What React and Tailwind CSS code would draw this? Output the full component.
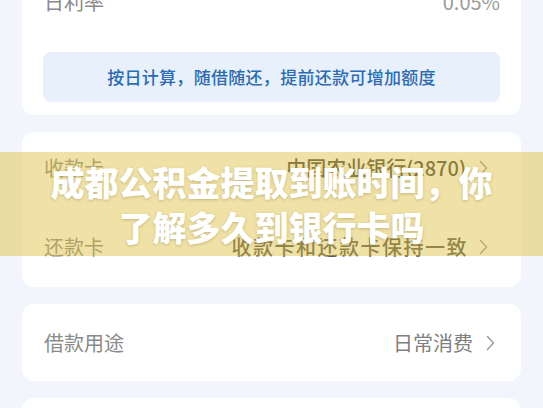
import React from "react";

function Chevron({ className = "" }) {
  return (
    <svg
      width="9"
      height="16"
      viewBox="0 0 9 16"
      fill="none"
      className={className}
    >
      <path d="M1.5 1.5 L7.5 8 L1.5 14.5" stroke="#9a9a9a" strokeWidth="1.4" strokeLinecap="round" strokeLinejoin="round" />
    </svg>
  );
}

function Row({ label, value, valueClass, chevronClass }) {
  return (
    <div className="flex items-center justify-between h-[32px]">
      <span className="text-[20px] text-[#8a8a8a] leading-none">{label}</span>
      <div className="flex items-center">
        <span className={`leading-none ${valueClass}`}>{value}</span>
        <Chevron className={chevronClass} />
      </div>
    </div>
  );
}

export default function App() {
  return (
    <div
      className="relative w-[543px] h-[408px] overflow-hidden bg-[#f2f5fb]"
      style={{ fontFamily: '"Noto Sans CJK SC", "Noto Sans", sans-serif' }}
    >
      <div className="flex flex-col gap-[17px] px-[22px] -mt-[24px]">
        {/* Rate card */}
        <div className="bg-white rounded-[12px] px-[21px] pb-[13px]">
          <div className="flex items-center justify-between h-[52px] pl-[1px]">
            <span className="text-[20px] text-[#8a8a8a] leading-none">日利率</span>
            <span className="text-[20px] text-[#9a9a9a] leading-none">0.05%</span>
          </div>
          <div className="mt-[24px] h-[50px] rounded-[8px] bg-[#e8f0fc] flex items-center justify-center">
            <span className="text-[17px] text-[#2a6bb4] font-medium tracking-[0.3px]">
              按日计算，随借随还，提前还款可增加额度
            </span>
          </div>
        </div>

        {/* Card settings */}
        <div className="bg-white rounded-[12px] pl-[22px] pr-[33px] pt-[20px] pb-[24px] flex flex-col gap-[47px]">
          <Row
            label="收款卡"
            value="中国农业银行(2870)"
            valueClass="text-[20px] text-[#444] font-medium"
            chevronClass="ml-[13px]"
          />
          <Row
            label="还款卡"
            value="收款卡和还款卡保持一致"
            valueClass="text-[20px] text-[#555] font-medium tracking-[1.5px]"
            chevronClass="ml-[11px]"
          />
        </div>

        {/* Purpose */}
        <div className="bg-white rounded-[12px] pl-[22px] pr-[26px] h-[77px] flex flex-col justify-center">
          <Row
            label="借款用途"
            value="日常消费"
            valueClass="text-[20px] text-[#808080]"
            chevronClass="ml-[13px]"
          />
        </div>

        <div className="bg-white rounded-[12px] h-[60px]" />
      </div>

      {/* Headline banner over the form */}
      <div className="absolute left-0 right-0 top-[152px] h-[104px] bg-[rgba(222,192,60,0.46)] flex flex-col items-center justify-center">
        <div
          className="text-white text-[34px] font-black leading-[45px] text-center"
          style={{ textShadow: "0 1px 3px rgba(120,100,40,0.35)" }}
        >
          <div>成都公积金提取到账时间，你</div>
          <div>了解多久到银行卡吗</div>
        </div>
      </div>
    </div>
  );
}
